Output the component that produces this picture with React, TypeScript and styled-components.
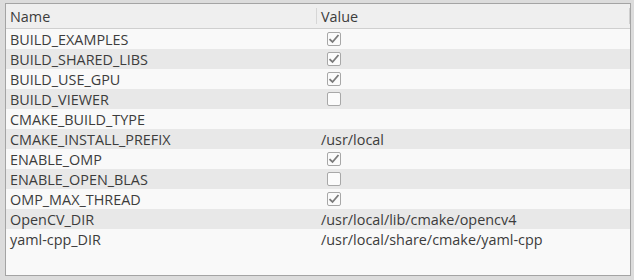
import React from "react";
import styled, { createGlobalStyle } from "styled-components";

const Global = createGlobalStyle`
  html, body { margin: 0; padding: 0; background: #dcdcdc; }
  body { font-family: "Open Sans", "Noto Sans", sans-serif; }
`;

const Frame = styled.div`
  margin: 3px 3px 4px 5px;
  height: 273px;
  box-sizing: border-box;
  border: 1px solid #a4a4a4;
  background: #f9f9f9;
  display: flex;
  flex-direction: column;
  overflow: hidden;
`;

const Header = styled.div`
  display: grid;
  grid-template-columns: 311px 1fr;
  height: 24px;
  background: #efefef;
  border-bottom: 1px solid #cfcfcf;
  flex-shrink: 0;
`;

const HeaderCell = styled.div`
  display: flex;
  align-items: center;
  padding-left: 4px;
  font-size: 14.4px;
  color: #3c3c3c;
  border-right: 1px solid #d6d6d6;
  margin: 4px 0;
  height: 16px;
  &:last-child { border-right-color: #cfcfcf; }
`;

const Row = styled.div<{ $alt: boolean }>`
  display: grid;
  grid-template-columns: 311px 1fr;
  height: 20px;
  background: ${(p) => (p.$alt ? "#e8e8e8" : "#f9f9f9")};
  align-items: center;
  font-size: 14.4px;
  color: #3c3c3c;
`;

const Cell = styled.div`
  padding-left: 4px;
  white-space: nowrap;
`;

const ValueCell = styled.div`
  padding-left: 4px;
  white-space: nowrap;
  display: flex;
  align-items: center;
`;

const Box = styled.span`
  display: inline-flex;
  align-items: center;
  justify-content: center;
  box-sizing: border-box;
  width: 14px;
  height: 14px;
  margin-left: 6px;
  border: 1px solid #a8a8a8;
  border-radius: 2px;
  background: #fbfbfb;
`;

const Check = ({ on }: { on: boolean }) => (
  <Box>
    {on && (
      <svg width="12" height="12" viewBox="0 0 12 12">
        <path d="M1.5 6.2 L4.5 9 L10.5 2" fill="none" stroke="#7a7a7a" strokeWidth="1.8" />
      </svg>
    )}
  </Box>
);

type Entry = { name: string; value?: string; check?: boolean };

const rows: Entry[] = [
  { name: "BUILD_EXAMPLES", check: true },
  { name: "BUILD_SHARED_LIBS", check: true },
  { name: "BUILD_USE_GPU", check: true },
  { name: "BUILD_VIEWER", check: false },
  { name: "CMAKE_BUILD_TYPE", value: "" },
  { name: "CMAKE_INSTALL_PREFIX", value: "/usr/local" },
  { name: "ENABLE_OMP", check: true },
  { name: "ENABLE_OPEN_BLAS", check: false },
  { name: "OMP_MAX_THREAD", check: true },
  { name: "OpenCV_DIR", value: "/usr/local/lib/cmake/opencv4" },
  { name: "yaml-cpp_DIR", value: "/usr/local/share/cmake/yaml-cpp" },
];

export default function App() {
  return (
    <>
      <Global />
      <Frame>
        <Header>
          <HeaderCell>Name</HeaderCell>
          <HeaderCell>Value</HeaderCell>
        </Header>
        {rows.map((r, i) => (
          <Row key={r.name} $alt={i % 2 === 1}>
            <Cell>{r.name}</Cell>
            <ValueCell>
              {r.check !== undefined ? <Check on={r.check} /> : r.value}
            </ValueCell>
          </Row>
        ))}
      </Frame>
    </>
  );
}
